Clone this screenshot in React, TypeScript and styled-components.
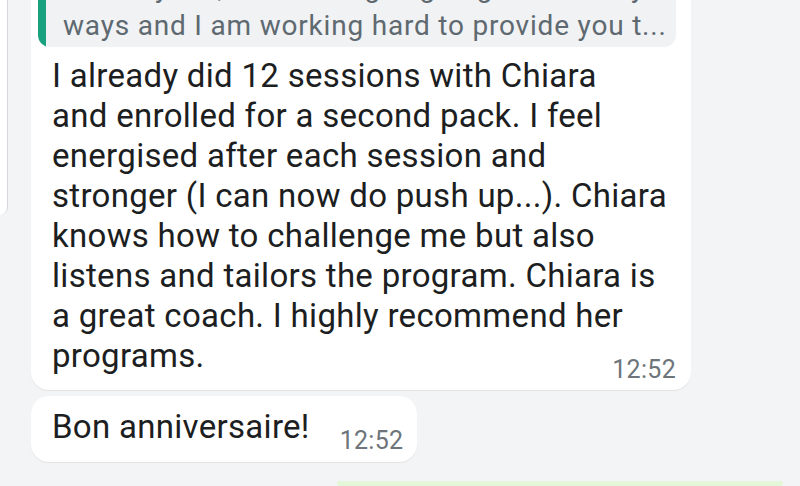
import React from 'react';
import styled, {createGlobalStyle} from 'styled-components';

const pageGrey = '#f3f4f6';
const inkColor = '#1c1e21';
const metaColor = '#6e757a';

const GlobalStyle = createGlobalStyle`
  html, body {
    margin: 0;
    padding: 0;
    background: ${pageGrey};
    font-family: Roboto, "Noto Sans", "Liberation Sans", sans-serif;
    overflow: hidden;
  }
`;

const Screen = styled.div`
  display: flex;
  height: 486px;
  overflow: hidden;
`;

/* the edge of the pane next to this one */
const SideEdge = styled.div`
  flex-shrink: 0;
  width: 7px;
  height: 215px;
  background: #ffffff;
  border-right: 1px solid #d5d8dc;
  border-bottom-right-radius: 10px;
`;

const Thread = styled.div`
  flex: 1;
  display: flex;
  flex-direction: column;
  align-items: flex-start;
  gap: 6px;
  margin: -40px 17px 0 23px;
`;

const Bubble = styled.div<{ $wide?: boolean }>`
  box-sizing: border-box;
  width: ${p => (p.$wide ? '660px' : 'auto')};
  background: #ffffff;
  border-radius: 18px;
  box-shadow: 0 1px 1px rgba(0 0 0 / 7%);
  padding: ${p => (p.$wide ? '7px 15px 14px 7px' : '11px 14px 15px 21px')};
`;

const Quote = styled.div`
  display: flex;
  background: #f1f2f4;
  border-radius: 12px;
  overflow: hidden;
`;

const QuoteBar = styled.div`
  flex-shrink: 0;
  width: 8px;
  background: #17a17f;
`;

const QuoteText = styled.div`
  padding: 2px 12px 2px 17px;
  font-size: 28px;
  line-height: 38px;
  letter-spacing: 0.8px;
  color: #5e6970;
  white-space: nowrap;
`;

const Content = styled.div`
  display: grid;
  margin-top: 9px;
  padding-left: 14px;
`;

const Body = styled.div`
  grid-area: 1 / 1;
  font-size: 33px;
  line-height: 40px;
  letter-spacing: 0.3px;
  color: ${inkColor};
  white-space: nowrap;
`;

const Time = styled.span`
  grid-area: 1 / 1;
  justify-self: end;
  align-self: end;
  font-size: 25px;
  line-height: 30px;
  letter-spacing: 0.3px;
  color: ${metaColor};
  margin-bottom: -9px;
`;

const Row = styled.div`
  display: flex;
  align-items: flex-end;
  gap: 30px;
`;

const Sent = styled.div`
  align-self: flex-end;
  width: 446px;
  height: 60px;
  margin-top: 13px;
  background: #e4f7d8;
  border-radius: 18px;
`;

const lines = [
  'I already did 12 sessions with Chiara',
  'and enrolled for a second pack. I feel',
  'energised after each session and',
  'stronger (I can now do push up...). Chiara',
  'knows how to challenge me but also',
  'listens and tailors the program. Chiara is',
  'a great coach. I highly recommend her',
  'programs.',
];

export default function App() {
  return (
    <>
      <GlobalStyle/>
      <Screen>
        <SideEdge/>
        <Thread>
          <Bubble $wide>
            <Quote>
              <QuoteBar/>
              <QuoteText>
                Hi everyone, the training is going on in many<br/>
                ways and I am working hard to provide you t...
              </QuoteText>
            </Quote>
            <Content>
              <Body>
                {lines.map((l, i) => (
                  <React.Fragment key={i}>
                    {l}
                    {i < lines.length - 1 && <br/>}
                  </React.Fragment>
                ))}
              </Body>
              <Time>12:52</Time>
            </Content>
          </Bubble>
          <Bubble>
            <Row>
              <Body>Bon anniversaire!</Body>
              <Time>12:52</Time>
            </Row>
          </Bubble>
          <Sent/>
        </Thread>
      </Screen>
    </>
  );
}
